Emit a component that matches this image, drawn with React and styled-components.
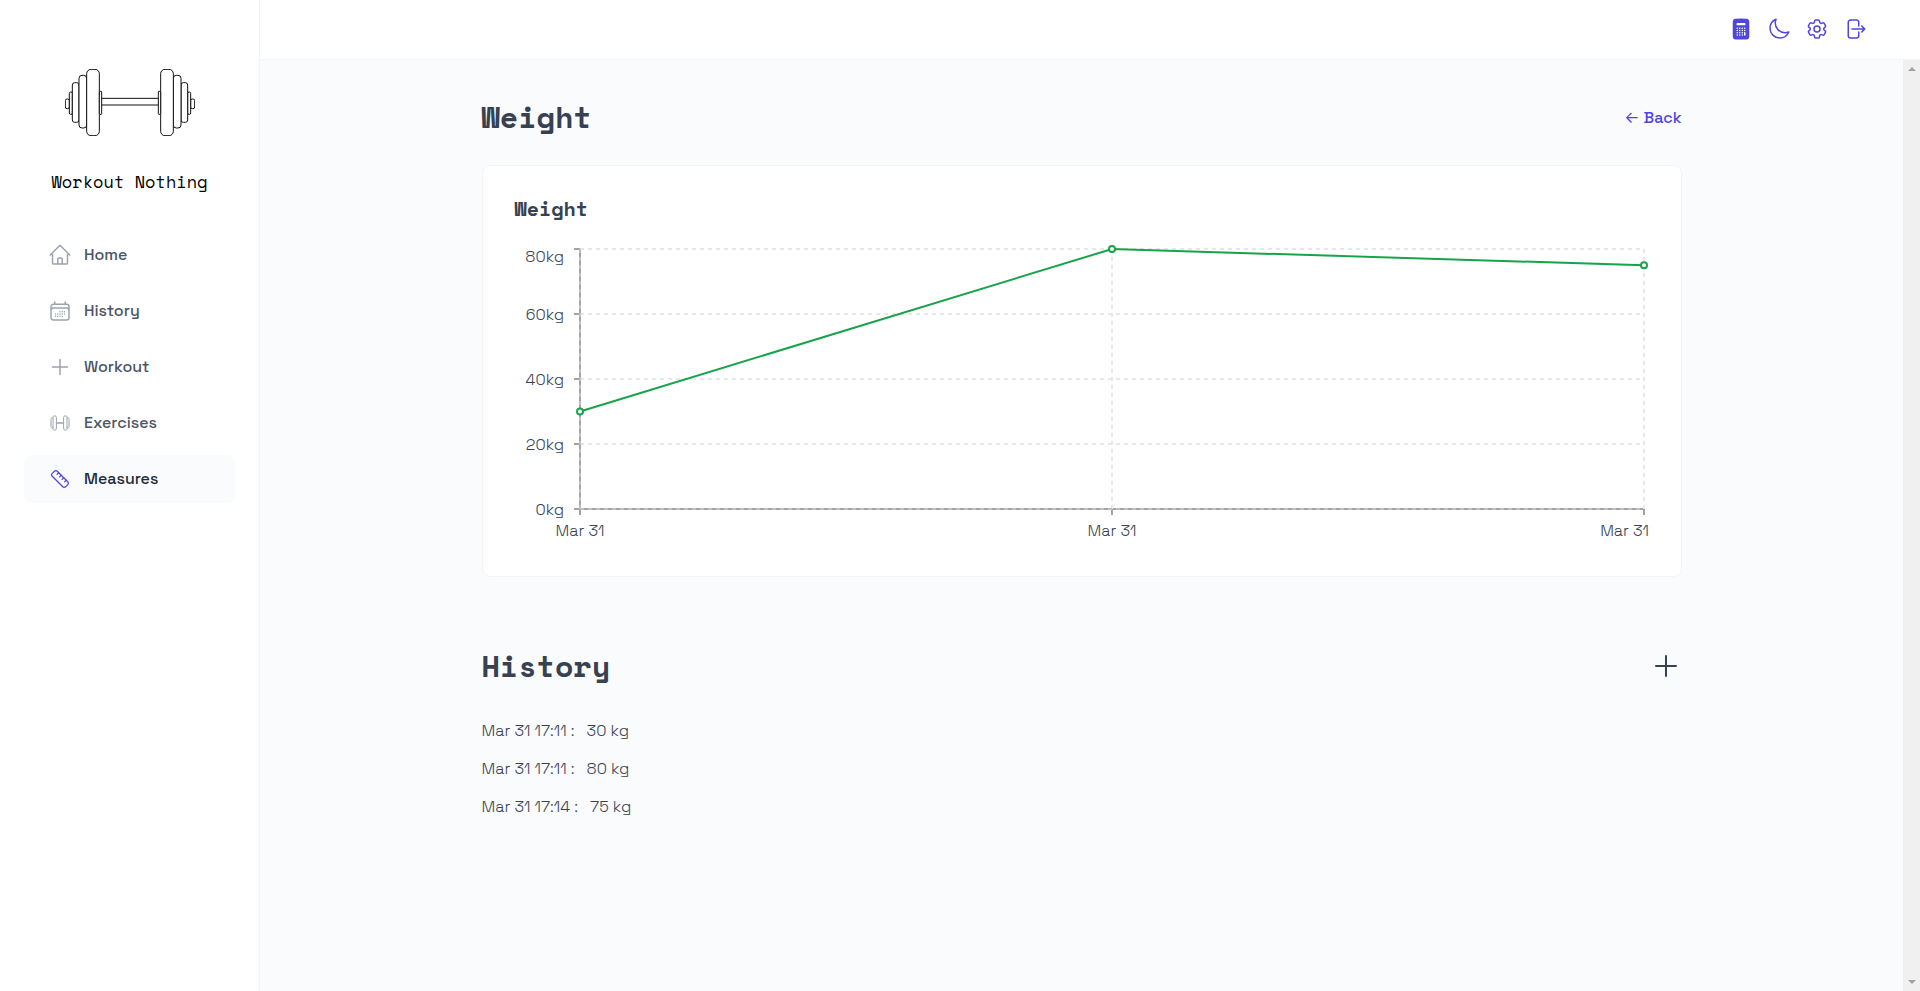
import React, { useEffect, useRef, useState } from "react";
import styled, { createGlobalStyle } from "styled-components";
import {
  HiOutlineHome,
  HiOutlineCalendarDays,
  HiOutlinePlus,
  HiOutlineMoon,
  HiOutlineCog6Tooth,
  HiOutlineArrowRightOnRectangle,
  HiCalculator,
} from "react-icons/hi2";
import { Ruler } from "lucide-react";

const sans = `"Space Grotesk", Inter, "Liberation Sans", sans-serif`;
const mono = `"Space Mono", "DejaVu Sans Mono", "Liberation Mono", monospace`;
const accent = "#4f46e0";

const GlobalStyle = createGlobalStyle`
  *, *::before, *::after { box-sizing: border-box; }
  body { margin: 0; font-family: ${sans}; font-size: 16px; line-height: 24px; color: #4b5563; }
  h1, h2, h3, p, ul { margin: 0; padding: 0; }
  ul { list-style: none; }
  a { text-decoration: none; color: inherit; }
  button { border: 0; padding: 0; background: none; font: inherit; color: inherit; cursor: pointer; }
`;

const Shell = styled.div`
  display: flex;
  height: 100vh;
  background: #fafbfd;
`;

const Sidebar = styled.aside`
  flex: none;
  width: 260px;
  padding: 69px 24px 24px;
  background: #ffffff;
  border-right: 1px solid #f3f4f6;
`;

const Brand = styled.a`
  display: flex;
  flex-direction: column;
  align-items: center;
  gap: 34px;
  margin-bottom: 37px;
  font-family: ${mono};
  font-size: 17px;
  color: #000000;
  white-space: nowrap;
`;

const NavList = styled.ul`
  display: flex;
  flex-direction: column;
  gap: 8px;
`;

const NavLink = styled.a`
  display: flex;
  align-items: center;
  gap: 12px;
  height: 48px;
  padding: 0 24px;
  border-radius: 8px;
  font-weight: 500;
  background: ${(p) => (p.$active ? "#fafbfd" : "transparent")};
  color: ${(p) => (p.$active ? "#1f2937" : "#4b5563")};

  svg {
    flex: none;
    color: ${(p) => (p.$active ? accent : "#9ca3af")};
  }
`;

const IconSlot = styled.span`
  display: flex;
  align-items: center;
  justify-content: center;
  width: 24px;
  height: 24px;
`;

const Page = styled.div`
  flex: 1;
  min-width: 0;
  display: flex;
  flex-direction: column;
`;

const TopBar = styled.header`
  display: flex;
  align-items: center;
  justify-content: flex-end;
  gap: 14px;
  height: 60px;
  padding: 0 53px 2px;
  background: #ffffff;
  border-bottom: 1px solid #f3f4f6;
`;

const IconButton = styled.button`
  display: flex;
  color: ${(p) => p.$color};
`;

const ScrollRow = styled.div`
  flex: 1;
  min-height: 0;
  display: flex;
`;

const Main = styled.main`
  flex: 1;
  min-width: 0;
  overflow-y: auto;
  scrollbar-width: none;
  padding: 39px 24px;
`;

const Track = styled.div`
  flex: none;
  display: flex;
  flex-direction: column;
  justify-content: space-between;
  align-items: center;
  width: 17px;
  padding: 7px 0;
  background: #f0f0f0;
`;

const Arrow = styled.span`
  border: 4px solid transparent;
  border-top-width: ${(p) => (p.$up ? 0 : 4)}px;
  border-bottom-width: ${(p) => (p.$up ? 4 : 0)}px;
  border-top-color: #a3a3a3;
  border-bottom-color: #a3a3a3;
`;

const Content = styled.div`
  max-width: 1200px;
  margin: 0 auto;
`;

const SectionHead = styled.div`
  display: flex;
  align-items: center;
  justify-content: space-between;
  height: 36px;
`;

const Title = styled.h1`
  font-family: ${mono};
  font-size: 30px;
  line-height: 36px;
  font-weight: 700;
  color: #374151;
`;

const BackLink = styled.a`
  font-weight: 500;
  color: ${accent};
`;

const BackArrow = styled.span`
  font-family: Inter, sans-serif;
  font-weight: 400;
`;

const Card = styled.section`
  margin: 30px 0 71px;
  padding: 27px 32px 32px;
  background: #ffffff;
  border: 1px solid #f3f4f6;
  border-radius: 8px;
`;

const CardTitle = styled.h3`
  font-family: ${mono};
  font-size: 20px;
  line-height: 32px;
  font-weight: 700;
  color: #374151;
`;

const ChartBox = styled.div`
  height: 319px;

  svg {
    display: block;
    overflow: visible;
  }

  text {
    font-size: 16px;
    font-weight: 300;
    fill: #374151;
  }
`;

const Entries = styled.ul`
  display: flex;
  flex-direction: column;
  gap: 14px;
  margin-top: 35px;
`;

const Entry = styled.li`
  display: flex;
  gap: 12px;
  font-weight: 300;
  color: #374151;
`;

const plates = [
  [1, 90, 12, 29, 5],
  [13, 69, 9, 67, 4],
  [22, 41, 20, 119, 7],
  [42, 19, 23, 158, 9],
  [65, 1, 38, 199, 13],
  [103, 67, 7, 69, 2],
];

function BrandMark() {
  const side = plates.map(([x, y, w, h, r]) => (
    <rect key={x} x={x} y={y} width={w} height={h} rx={r} />
  ));
  return (
    <svg width="130" height="67" viewBox="0 0 390 201" fill="#fff" stroke="#111" strokeWidth="3" aria-hidden="true">
      <rect x="108" y="88" width="174" height="20" />
      <g>{side}</g>
      <g transform="translate(390 0) scale(-1 1)">{side}</g>
    </svg>
  );
}

function BarbellIcon() {
  return (
    <svg width="24" height="24" viewBox="0 0 24 24" fill="none" stroke="currentColor" aria-hidden="true">
      <path d="M8.500 12h7" strokeWidth="1.500" />
      <rect x="5" y="4.800" width="3.400" height="14.400" rx="1.700" />
      <rect x="15.600" y="4.800" width="3.400" height="14.400" rx="1.700" />
      <path d="M5 6.800c-1.400 0-2 .6-2 1.800v6.800c0 1.200.6 1.800 2 1.800M19 6.800c1.400 0 2 .6 2 1.800v6.800c0 1.200-.6 1.800-2 1.800" />
    </svg>
  );
}

const navItems = [
  { label: "Home", icon: <HiOutlineHome size={24} /> },
  { label: "History", icon: <HiOutlineCalendarDays size={24} /> },
  { label: "Workout", icon: <HiOutlinePlus size={24} /> },
  { label: "Exercises", icon: <BarbellIcon /> },
  { label: "Measures", icon: <Ruler size={20} strokeWidth={1.5} />, active: true },
];

const actions = [
  { label: "Calculator", icon: <HiCalculator size={24} /> },
  { label: "Dark mode", icon: <HiOutlineMoon size={24} /> },
  { label: "Settings", icon: <HiOutlineCog6Tooth size={24} /> },
  { label: "Log out", icon: <HiOutlineArrowRightOnRectangle size={24} /> },
];

const entries = [
  { date: "Mar 31", time: "17:11", value: 30 },
  { date: "Mar 31", time: "17:11", value: 80 },
  { date: "Mar 31", time: "17:14", value: 75 },
];

function WeightChart({ data }) {
  const box = useRef(null);
  const [width, setWidth] = useState(1134);

  useEffect(() => {
    const observer = new ResizeObserver(([e]) => setWidth(Math.round(e.contentRect.width)));
    observer.observe(box.current);
    return () => observer.disconnect();
  }, []);

  const left = 65;
  const right = width - 5;
  const top = 24;
  const bottom = 284;
  const max = 80;
  const xs = data.map((_, i) => Math.round(left + ((right - left) * i) / (data.length - 1)));
  const yOf = (v) => bottom - ((bottom - top) * v) / max;

  return (
    <ChartBox ref={box}>
      <svg width={width} height="319" role="img" aria-label="Weight over time">
        <g stroke="#a3a3a3" strokeWidth="2">
          <path d={`M${left} ${top}V${bottom}H${right}`} fill="none" />
          {[0, 20, 40, 60, 80].map((v) => (
            <path key={v} d={`M${left - 6} ${yOf(v)}h6`} />
          ))}
          {xs.map((x) => (
            <path key={x} d={`M${x} ${bottom}v6`} />
          ))}
        </g>
        <g stroke="#e5e7eb" strokeWidth="2" strokeDasharray="4 4">
          {[20, 40, 60, 80].map((v) => (
            <path key={v} d={`M${left} ${yOf(v)}H${right}`} />
          ))}
          {xs.slice(1).map((x) => (
            <path key={x} d={`M${x} ${top}V${bottom}`} />
          ))}
        </g>
        <g stroke="#bebebe" strokeWidth="2" strokeDasharray="4 4">
          <path d={`M${left} ${top}V${bottom}`} />
          <path d={`M${left} ${bottom}H${right}`} />
        </g>
        {[0, 20, 40, 60, 80].map((v) => (
          <text key={v} x={left - 16} y={Math.max(yOf(v), top + 7) + 6} textAnchor="end">
            {v}kg
          </text>
        ))}
        {data.map((d, i) => {
          const last = i === data.length - 1;
          return (
            <text key={i} x={last ? width : xs[i]} y={bottom + 27} textAnchor={last ? "end" : "middle"}>
              {d.date}
            </text>
          );
        })}
        <polyline
          points={data.map((d, i) => `${xs[i]},${yOf(d.value)}`).join(" ")}
          fill="none"
          stroke="#16a34a"
          strokeWidth="2"
        />
        {data.map((d, i) => (
          <circle key={i} cx={xs[i]} cy={yOf(d.value)} r="3" fill="#fff" stroke="#16a34a" strokeWidth="2" />
        ))}
      </svg>
    </ChartBox>
  );
}

export default function App() {
  return (
    <>
      <GlobalStyle />
      <Shell>
        <Sidebar>
          <Brand href="#home">
            <BrandMark />
            Workout Nothing
          </Brand>
          <nav>
            <NavList>
              {navItems.map(({ label, icon, active }) => (
                <li key={label}>
                  <NavLink href={`#${label.toLowerCase()}`} $active={active}>
                    <IconSlot>{icon}</IconSlot>
                    {label}
                  </NavLink>
                </li>
              ))}
            </NavList>
          </nav>
        </Sidebar>
        <Page>
          <TopBar>
            {actions.map(({ label, icon }) => (
              <IconButton key={label} type="button" aria-label={label} $color={accent}>
                {icon}
              </IconButton>
            ))}
          </TopBar>
          <ScrollRow>
            <Main>
              <Content>
                <SectionHead>
                  <Title>Weight</Title>
                  <BackLink href="#measures">
                    <BackArrow>←</BackArrow> Back
                  </BackLink>
                </SectionHead>
                <Card>
                  <CardTitle>Weight</CardTitle>
                  <WeightChart data={entries} />
                </Card>
                <SectionHead>
                  <Title as="h2">History</Title>
                  <IconButton type="button" aria-label="Add entry" $color="#374151">
                    <HiOutlinePlus size={32} />
                  </IconButton>
                </SectionHead>
                <Entries>
                  {entries.map(({ date, time, value }, i) => (
                    <Entry key={i}>
                      <span>{date} {time} :</span>
                      <span>{value} kg</span>
                    </Entry>
                  ))}
                </Entries>
              </Content>
            </Main>
            <Track aria-hidden="true">
              <Arrow $up />
              <Arrow />
            </Track>
          </ScrollRow>
        </Page>
      </Shell>
    </>
  );
}
